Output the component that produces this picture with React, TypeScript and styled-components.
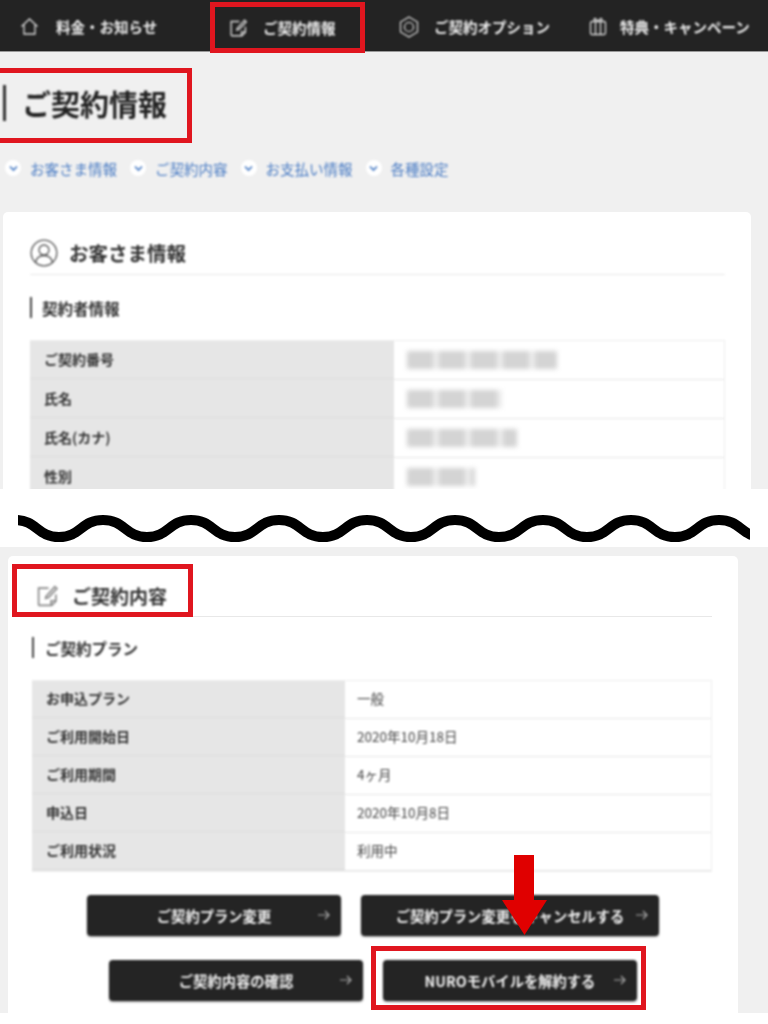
import styled, { createGlobalStyle, css } from "styled-components";

const GlobalStyle = createGlobalStyle`
  html, body {
    margin: 0;
    padding: 0;
    background: #fff;
  }
  * {
    box-sizing: border-box;
  }
`;

// the page itself is a soft capture, the red marks were drawn on top of it
const soft = css`
  filter: blur(0.8px);
`;

const customerRows = [
  { label: "ご契約番号", blur: 150 },
  { label: "氏名", blur: 95 },
  { label: "氏名(カナ)", blur: 110 },
  { label: "性別", blur: 68 },
];

const planRows = [
  { label: "お申込プラン", value: "一般" },
  { label: "ご利用開始日", value: "2020年10月18日" },
  { label: "ご利用期間", value: "4ヶ月" },
  { label: "申込日", value: "2020年10月8日" },
  { label: "ご利用状況", value: "利用中" },
];

const links = ["お客さま情報", "ご契約内容", "お支払い情報", "各種設定"];

const HomeIcon = () => (
  <svg width="19" height="19" viewBox="0 0 19 19" fill="none" stroke="#ddd" strokeWidth="1.3">
    <path d="M1.5 9.5 9.5 2l8 7.5M4 8v9h11V8" />
  </svg>
);

const EditIcon = ({ size, color }: { size: number; color: string }) => (
  <svg width={size} height={size} viewBox="0 0 22 22" fill="none" stroke={color} strokeWidth="1.6">
    <path d="M12 4H2.5v15.5a1 1 0 0 0 1 1H15l4-4V10" />
    <path d="M19 16h-4.500v4.500M9.500 12 18 2.500l2 1.800L12 13l-2.800.8z" />
  </svg>
);

const GearIcon = () => (
  <svg width="20" height="22" viewBox="0 0 20 22" fill="none" stroke="#ddd" strokeWidth="1.2">
    <path d="M10 1 18.500 6v10L10 21 1.500 16V6z" />
    <circle cx="10" cy="11" r="4.500" />
  </svg>
);

const GiftIcon = () => (
  <svg width="18" height="19" viewBox="0 0 18 19" fill="none" stroke="#ddd" strokeWidth="1.3">
    <rect x="1.500" y="4.500" width="15" height="13" rx="1.500" />
    <path d="M6.500 4.500v13M11.500 4.500v13M6.500 4.500C4 3 5 1 6.500 1.500L9 4.500l2.500-3C13 1 14 3 11.500 4.500" />
  </svg>
);

const UserIcon = () => (
  <svg width="28" height="28" viewBox="0 0 28 28" fill="none" stroke="#555" strokeWidth="1.300">
    <circle cx="14" cy="14" r="12.800" />
    <circle cx="14" cy="11" r="5" />
    <path d="M5.500 23.500c1-5 4.500-7 8.500-7s7.500 2 8.500 7" />
  </svg>
);

const ChevronIcon = () => (
  <svg width="9" height="7" viewBox="0 0 9 7" fill="none" stroke="#4a7cc4" strokeWidth="1.700">
    <path d="M1 1.500 4.500 5 8 1.500" />
  </svg>
);

const ArrowIcon = () => (
  <svg width="12" height="10" viewBox="0 0 12 10" fill="none" stroke="#aaa" strokeWidth="1.200">
    <path d="M0 5h11M7 1l4 4-4 4" />
  </svg>
);

const wavePath = () => {
  let d = "M-3 5";
  for (let i = 0; i < 9; i++) {
    const x = -3 + i * 44 * 2;
    d += ` C${x + 22} 5 ${x + 22} 22 ${x + 44} 22`;
    d += ` C${x + 66} 22 ${x + 66} 5 ${x + 88} 5`;
  }
  return d;
};

export default function App() {
  return (
    <Page>
      <GlobalStyle />
      <Nav>
        <NavItem $pad={20}>
          <NavContent $gap={17}>
            <HomeIcon />
            料金・お知らせ
          </NavContent>
        </NavItem>
        <NavItem $pad={14} $active>
          <NavContent $gap={15}>
            <EditIcon size={19} color="#ddd" />
            ご契約情報
          </NavContent>
        </NavItem>
        <NavItem $pad={34}>
          <NavContent $gap={15}>
            <GearIcon />
            ご契約オプション
          </NavContent>
        </NavItem>
        <NavItem $pad={16}>
          <NavContent $gap={13}>
            <GiftIcon />
            特典・キャンペーン
          </NavContent>
        </NavItem>
      </Nav>

      <TopSection>
        <PageTitleBox>
          <PageTitle>ご契約情報</PageTitle>
        </PageTitleBox>
        <LinkRow>
          {links.map((item) => (
            <AnchorLink key={item}>
              <ChevronCircle>
                <ChevronIcon />
              </ChevronCircle>
              {item}
            </AnchorLink>
          ))}
        </LinkRow>
        <TopCard>
          <CardTitle>
            <UserIcon />
            <CardTitleText>お客さま情報</CardTitleText>
          </CardTitle>
          <SubHeading>契約者情報</SubHeading>
          <InfoTable $labelWidth={364}>
            {customerRows.map((row) => (
              <InfoRow key={row.label} $height={39}>
                <LabelCell>{row.label}</LabelCell>
                <ValueCell>
                  <BlurredValue style={{ width: row.blur }} />
                </ValueCell>
              </InfoRow>
            ))}
          </InfoTable>
        </TopCard>
      </TopSection>

      <WaveBand>
        <WaveSvg viewBox="0 0 732 27">
          <path d={wavePath()} fill="none" stroke="#000" strokeWidth="10" />
        </WaveSvg>
      </WaveBand>

      <BottomSection>
        <BottomCard>
          <ContractTitleRow>
            <ContractTitleBox>
              <ContractTitleInner>
                <EditIcon size={23} color="#888" />
                <ContractTitleText>ご契約内容</ContractTitleText>
              </ContractTitleInner>
            </ContractTitleBox>
          </ContractTitleRow>
          <PlanHeading>ご契約プラン</PlanHeading>
          <InfoTable $labelWidth={313}>
            {planRows.map((row) => (
              <InfoRow key={row.label} $height={38}>
                <LabelCell>{row.label}</LabelCell>
                <PlanValue>{row.value}</PlanValue>
              </InfoRow>
            ))}
          </InfoTable>
          <ButtonGroup>
            <ButtonRow>
              <ActionButton $width={254}>
                ご契約プラン変更
                <ButtonArrow>
                  <ArrowIcon />
                </ButtonArrow>
              </ActionButton>
              <ActionButton $width={298}>
                ご契約プラン変更をキャンセルする
                <ButtonArrow>
                  <ArrowIcon />
                </ButtonArrow>
              </ActionButton>
            </ButtonRow>
            <ButtonRow>
              <ActionButton $width={254}>
                ご契約内容の確認
                <ButtonArrow>
                  <ArrowIcon />
                </ButtonArrow>
              </ActionButton>
              <MarkedButton>
                <ActionButton $width={254}>
                  NUROモバイルを解約する
                  <ButtonArrow>
                    <ArrowIcon />
                  </ButtonArrow>
                </ActionButton>
                <ButtonHighlight />
              </MarkedButton>
            </ButtonRow>
          </ButtonGroup>
          <RedArrow viewBox="0 0 45 80">
            <path d="M12 0h20v45h13L22.500 80 0 45h12z" fill="#e00000" />
          </RedArrow>
        </BottomCard>
      </BottomSection>
    </Page>
  );
}

const Page = styled.div`
  width: 768px;
  height: 1024px;
  overflow: hidden;
  position: relative;
  font-family: "Noto Sans CJK JP", "Noto Sans", sans-serif;
  color: #333;
`;

const Nav = styled.nav`
  height: 52px;
  background: #232323;
  border-bottom: 1px solid #999;
  display: grid;
  grid-template-columns: 210px 155px 208px 1fr;
`;

const NavItem = styled.div<{ $pad: number; $active?: boolean }>`
  display: flex;
  align-items: center;
  padding-left: ${(p) => p.$pad}px;
  ${(p) =>
    p.$active &&
    `
    margin-top: 2px;
    height: 51px;
    border: 5px solid #e0161f;
    position: relative;
    z-index: 1;
  `}
`;

const NavContent = styled.div<{ $gap: number }>`
  ${soft}
  display: flex;
  align-items: center;
  gap: ${(p) => p.$gap}px;
  color: #eee;
  font-size: 14.500px;
  font-weight: 700;
  white-space: nowrap;
`;

const TopSection = styled.section`
  height: 437px;
  overflow: hidden;
  background: #f0f0f0;
  padding-top: 16px;
`;

const PageTitleBox = styled.div`
  width: 192px;
  height: 75px;
  border: 5px solid #e0161f;
  border-left: none;
  display: flex;
  align-items: center;
  padding: 0 0 5px 3px;
`;

const PageTitle = styled.h1`
  ${soft}
  margin: 0;
  height: 36px;
  display: flex;
  align-items: center;
  border-left: 3px solid #333;
  padding-left: 16px;
  font-size: 29px;
  font-weight: 700;
  color: #222;
  white-space: nowrap;
`;

const LinkRow = styled.div`
  ${soft}
  display: flex;
  gap: 13px;
  padding-left: 5px;
  margin-top: 14px;
  height: 22px;
  align-items: center;
`;

const AnchorLink = styled.a`
  display: flex;
  align-items: center;
  gap: 9px;
  color: #4a7cc4;
  font-size: 14.500px;
`;

const ChevronCircle = styled.span`
  width: 16px;
  height: 16px;
  border-radius: 50%;
  background: #fff;
  display: flex;
  align-items: center;
  justify-content: center;
`;

const TopCard = styled.div`
  width: 748px;
  margin: 33px 0 0 3px;
  padding: 27px 26px 0 27px;
  background: #fff;
  border-radius: 5px 5px 0 0;
`;

const CardTitle = styled.div`
  ${soft}
  display: flex;
  align-items: center;
  gap: 11px;
  height: 36px;
  padding-bottom: 8px;
  border-bottom: 1.500px solid #e8e8e8;
`;

const CardTitleText = styled.h2`
  margin: 0;
  font-size: 19.500px;
  font-weight: 700;
  color: #333;
  white-space: nowrap;
`;

const ContractTitleText = styled(CardTitleText)`
  font-size: 19px;
`;

const SubHeading = styled.h3`
  ${soft}
  margin: 22px 0 22px;
  height: 21px;
  display: flex;
  align-items: center;
  border-left: 2px solid #444;
  padding-left: 10px;
  font-size: 15.500px;
  font-weight: 700;
`;

const PlanHeading = styled(SubHeading)`
  padding-left: 11px;
  margin: 20px 0 22px;
`;

const InfoTable = styled.div<{ $labelWidth: number }>`
  ${soft}
  --label-width: ${(p) => p.$labelWidth}px;
  border: 1px solid #eee;
  border-left: none;
`;

const InfoRow = styled.div<{ $height: number }>`
  display: grid;
  grid-template-columns: var(--label-width) 1fr;
  height: ${(p) => p.$height}px;
  border-bottom: 1px solid #e6e6e6;
`;

const LabelCell = styled.div`
  background: #e6e6e6;
  display: flex;
  align-items: center;
  padding: 0 0 2px 14px;
  font-size: 14px;
  font-weight: 700;
  border-bottom: 1px solid #dcdcdc;
`;

const ValueCell = styled.div`
  display: flex;
  align-items: center;
  padding-left: 13px;
`;

const PlanValue = styled(ValueCell)`
  padding: 0 0 3px 12px;
  font-size: 13.500px;
  color: #444;
`;

const BlurredValue = styled.div`
  height: 18px;
  background: repeating-linear-gradient(90deg, #d4d4d4 0 26px, #ececec 26px 32px);
  filter: blur(2px);
`;

const WaveBand = styled.div`
  height: 58px;
  background: #fff;
  padding: 26px 18px 0;
`;

const WaveSvg = styled.svg`
  display: block;
  width: 732px;
  height: 27px;
`;

const BottomSection = styled.section`
  height: 466px;
  background: #f0f0f0;
  padding: 9px 30px 0 8px;
`;

const BottomCard = styled.div`
  position: relative;
  height: 457px;
  padding: 8px 26px 0 24px;
  background: #fff;
  border-radius: 5px 5px 0 0;
`;

const ContractTitleRow = styled.div`
  height: 53px;
  border-bottom: 1.500px solid #e8e8e8;
`;

const ContractTitleBox = styled.div`
  width: 181px;
  height: 53px;
  margin-left: -20px;
  padding: 9px 0 0 19px;
  display: flex;
  align-items: center;
  border: 5px solid #e0161f;
`;

const ContractTitleInner = styled.div`
  ${soft}
  display: flex;
  align-items: center;
  gap: 13px;
`;

const ButtonGroup = styled.div`
  display: flex;
  flex-direction: column;
  align-items: center;
  gap: 24px;
  margin: 23px 0 0 2px;
`;

const ButtonRow = styled.div`
  display: flex;
  gap: 20px;
`;

const MarkedButton = styled.div`
  position: relative;
  display: flex;
`;

const ActionButton = styled.button<{ $width: number }>`
  ${soft}
  position: relative;
  width: ${(p) => p.$width}px;
  height: 41px;
  border: none;
  border-radius: 4px;
  background: #242424;
  color: #f2f2f2;
  font-family: inherit;
  font-size: 14.300px;
  font-weight: 700;
  box-shadow: 0 1px 2px rgba(0, 0, 0, 0.4);
  white-space: nowrap;
  padding: 0;
`;

const ButtonArrow = styled.span`
  position: absolute;
  right: 11px;
  top: 15px;
  display: flex;
`;

const ButtonHighlight = styled.span`
  position: absolute;
  inset: -14px -9px -9px -12px;
  border: 5px solid #e0161f;
  pointer-events: none;
`;

const RedArrow = styled.svg`
  position: absolute;
  left: 494px;
  top: 299px;
  width: 45px;
  height: 80px;
`;
